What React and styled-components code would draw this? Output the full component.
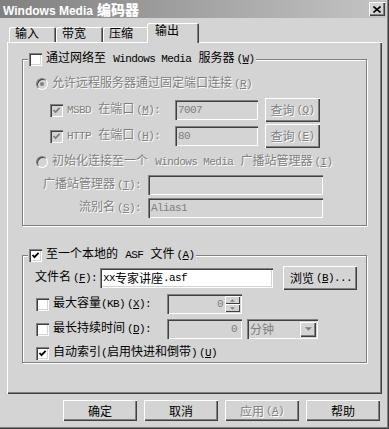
import React from "react";
import styled, { createGlobalStyle } from "styled-components";

const FACE = "#d4d4d4";
const SHADOW = "#808080";
const DARK = "#404040";

const GlobalStyle = createGlobalStyle`
  html, body {
    margin: 0;
    padding: 0;
    background: ${FACE};
  }
  body {
    font-family: "Liberation Mono", "Noto Sans CJK SC", monospace;
    font-size: 12px;
    color: #000;
  }
`;

const Window = styled.div`
  width: 389px;
  height: 429px;
  box-sizing: border-box;
  background: ${FACE};
  box-shadow: inset -1px -1px ${DARK}, inset -2px -2px ${SHADOW};
  display: flex;
  flex-direction: column;
`;

const TitleBar = styled.div`
  height: 18px;
  margin-right: 3px;
  display: flex;
  align-items: center;
  justify-content: space-between;
  background: linear-gradient(to right, #808080, #c4c4c4);
`;

const TitleText = styled.span`
  padding-left: 3px;
  color: #fff;
  font-family: "Liberation Sans", "Noto Sans CJK SC", sans-serif;
  font-weight: 700;
  font-size: 12px;
  white-space: nowrap;

  b {
    font-size: 14px;
    margin-left: 4px;
  }
`;

const CloseButton = styled.span`
  width: 16px;
  height: 14px;
  margin-right: 1px;
  box-sizing: border-box;
  display: flex;
  align-items: center;
  justify-content: center;
  background: ${FACE};
  box-shadow: inset 1px 1px #fff, inset -1px -1px ${DARK}, inset -2px -2px ${SHADOW};
`;

const Body = styled.div`
  padding-left: 7px;
  display: flex;
  flex-direction: column;
`;

const TabStrip = styled.div`
  height: 24px;
  padding-left: 2px;
  display: flex;
  align-items: flex-end;
`;

const Tab = styled.div`
  box-sizing: border-box;
  width: ${({ $active }) => ($active ? 52 : 47)}px;
  height: ${({ $active }) => ($active ? 20 : 15)}px;
  margin: ${({ $active }) => ($active ? "0 -2px -1px -3px" : "0")};
  padding-left: ${({ $active }) => ($active ? 8 : 6)}px;
  padding-top: ${({ $active }) => ($active ? 2 : 0)}px;
  display: flex;
  align-items: ${({ $active }) => ($active ? "flex-start" : "center")};
  line-height: 14px;
  background: ${FACE};
  border-radius: 2px 2px 0 0;
  box-shadow: inset 1px 1px #fff, inset -1px 0 ${DARK}, inset -2px 0 ${SHADOW};
  position: relative;
  z-index: ${({ $active }) => ($active ? 1 : 0)};
`;

const Panel = styled.div`
  width: 375px;
  height: 352px;
  box-sizing: border-box;
  padding: 10px 0 0 15px;
  box-shadow: inset 1px 1px #fff, inset -1px -1px ${DARK}, inset -2px -2px ${SHADOW};
  display: flex;
  flex-direction: column;
`;

const Group = styled.fieldset`
  width: 345px;
  box-sizing: border-box;
  margin: ${({ $top }) => $top || 0}px 0 0 0;
  padding: 0 0 ${({ $bottom }) => $bottom}px 0;
  border: 1px solid ${SHADOW};
  box-shadow: inset 1px 1px #fff, 1px 1px #fff;
  min-width: 0;
`;

const Legend = styled.legend`
  margin-left: 5px;
  padding: 0 2px 0 1px;
  height: 14px;
  background: ${FACE};
  white-space: nowrap;
`;

const Inline = styled.span`
  display: inline-flex;
  align-items: center;
  gap: 4px;
  height: 14px;
  line-height: 14px;
  white-space: nowrap;
`;

const Row = styled.div`
  display: flex;
  align-items: center;
  height: ${({ $h }) => $h}px;
  margin-top: ${({ $mt }) => $mt}px;
  padding-left: ${({ $pl }) => $pl || 0}px;
  white-space: nowrap;
`;

const Cell = styled.div`
  width: ${({ $w }) => $w}px;
  flex: none;
  display: flex;
  align-items: center;
  justify-content: ${({ $right }) => ($right ? "flex-end" : "flex-start")};
  padding-right: ${({ $right }) => ($right ? 7 : 0)}px;
  box-sizing: border-box;
  gap: 4px;
`;

const Label = styled.span`
  line-height: 14px;
  white-space: nowrap;
  color: ${({ $disabled }) => ($disabled ? SHADOW : "#000")};
  text-shadow: ${({ $disabled }) => ($disabled ? "1px 1px 0 #fff" : "none")};
`;

// Latin runs: narrow 6px cells like the dialog's bitmap font
const Lat = styled.span`
  font-family: "Liberation Mono", monospace;
  font-size: 11px;
  letter-spacing: -0.6px;
`;

const KeyHint = styled(Lat)`
  margin-left: 2px;

  u {
    text-underline-offset: 1px;
  }
`;

const Key = ({ k }) => (
  <KeyHint>
    (<u>{k}</u>)
  </KeyHint>
);

const Box = styled.span`
  width: 13px;
  height: 13px;
  flex: none;
  box-sizing: border-box;
  display: inline-flex;
  align-items: center;
  justify-content: center;
  background: ${({ $disabled }) => ($disabled ? FACE : "#fff")};
  box-shadow: inset 1px 1px ${SHADOW}, inset 2px 2px ${DARK}, inset -1px -1px #fff,
    inset -2px -2px ${FACE};
`;

const Check = ({ checked, disabled }) => (
  <Box $disabled={disabled}>
    {checked && (
      <svg width="9" height="9" viewBox="0 0 9 9">
        <path
          d="M1.5 4 L3.5 6.2 L7.6 1.8"
          fill="none"
          stroke={disabled ? SHADOW : "#000"}
          strokeWidth="1.8"
        />
      </svg>
    )}
  </Box>
);

const RadioRing = styled.span`
  width: 12px;
  height: 12px;
  flex: none;
  box-sizing: border-box;
  border-radius: 50%;
  display: inline-flex;
  align-items: center;
  justify-content: center;
  background: ${({ $disabled }) => ($disabled ? FACE : "#fff")};
  border: 1px solid;
  border-color: ${SHADOW} #fff #fff ${SHADOW};
  box-shadow: inset 1px 1px ${DARK};
`;

const Dot = styled.span`
  width: 4px;
  height: 4px;
  border-radius: 50%;
  background: ${({ $disabled }) => ($disabled ? SHADOW : "#000")};
`;

const Radio = ({ checked, disabled }) => (
  <RadioRing $disabled={disabled}>{checked && <Dot $disabled={disabled} />}</RadioRing>
);

const Field = styled.div`
  width: ${({ $w }) => $w}px;
  height: ${({ $h }) => $h || 20}px;
  flex: none;
  margin-left: ${({ $ml }) => $ml || 0}px;
  box-sizing: border-box;
  padding: 0 ${({ $pr }) => $pr || 3}px 0 3px;
  display: flex;
  align-items: center;
  justify-content: ${({ $right }) => ($right ? "flex-end" : "flex-start")};
  background: ${({ $disabled }) => ($disabled ? FACE : "#fff")};
  color: ${({ $disabled }) => ($disabled ? SHADOW : "#000")};
  box-shadow: inset 1px 1px ${SHADOW}, inset 2px 2px ${DARK}, inset -1px -1px #fff,
    inset -2px -2px ${FACE};
  white-space: nowrap;
`;

const Button = styled.div`
  width: ${({ $w }) => $w}px;
  height: ${({ $h }) => $h || 21}px;
  flex: none;
  margin-left: ${({ $ml }) => $ml || 0}px;
  box-sizing: border-box;
  display: flex;
  align-items: center;
  justify-content: ${({ $left }) => ($left ? "flex-start" : "center")};
  padding-left: ${({ $left }) => ($left ? 7 : 0)}px;
  background: ${FACE};
  color: ${({ $disabled }) => ($disabled ? SHADOW : "#000")};
  text-shadow: ${({ $disabled }) => ($disabled ? "1px 1px 0 #fff" : "none")};
  box-shadow: inset 1px 1px #fff, inset -1px -1px ${DARK}, inset -2px -2px ${SHADOW};
  white-space: nowrap;
`;

const SpinValue = styled(Lat)`
  margin-left: auto;
  margin-right: 2px;
`;

const SpinBox = styled.div`
  width: 15px;
  height: 16px;
  display: flex;
  flex-direction: column;
`;

const SpinHalf = styled.span`
  flex: 1;
  display: flex;
  align-items: center;
  justify-content: center;
  background: ${FACE};
  box-shadow: inset 1px 1px #fff, inset -1px -1px ${DARK};
`;

const Arrow = ({ up, size = 5 }) => (
  <svg width={size} height={Math.ceil(size / 2)} viewBox="0 0 6 3">
    <path d={up ? "M0 3 L3 0 L6 3 Z" : "M0 0 L6 0 L3 3 Z"} fill={SHADOW} />
  </svg>
);

const DropButton = styled.span`
  margin-left: auto;
  width: 16px;
  height: 15px;
  display: flex;
  align-items: center;
  justify-content: center;
  background: ${FACE};
  box-shadow: inset 1px 1px #fff, inset -1px -1px ${DARK}, inset -2px -2px ${SHADOW};
`;

const ButtonRow = styled.div`
  margin-top: 6px;
  padding-right: 9px;
  display: flex;
  justify-content: flex-end;
  gap: 7px;
`;

export default function App() {
  return (
    <>
      <GlobalStyle />
      <Window>
        <TitleBar>
          <TitleText>
            Windows Media<b>编码器</b>
          </TitleText>
          <CloseButton>
            <svg width="8" height="7" viewBox="0 0 8 7">
              <path d="M0.5 0.5 L7.5 6.5 M7.5 0.5 L0.5 6.5" stroke="#000" strokeWidth="1.6" />
            </svg>
          </CloseButton>
        </TitleBar>

        <Body>
          <TabStrip>
            <Tab>输入</Tab>
            <Tab>带宽</Tab>
            <Tab>压缩</Tab>
            <Tab $active>输出</Tab>
          </TabStrip>

          <Panel>
            <Group $bottom={7}>
              <Legend>
                <Inline>
                  <Check />
                  <Label>
                    通过网络至 <Lat>Windows Media</Lat> 服务器<Key k="W" />
                  </Label>
                </Inline>
              </Legend>

              <Row $h={14} $mt={11} $pl={13}>
                <Cell $w={240}>
                  <Radio checked disabled />
                  <Label $disabled>
                    允许远程服务器通过固定端口连接<Key k="R" />
                  </Label>
                </Cell>
              </Row>

              <Row $h={24} $mt={7} $pl={27}>
                <Cell $w={125}>
                  <Check checked disabled />
                  <Label $disabled>
                    <Lat>MSBD</Lat> 在端口<Key k="M" />
                    <Lat>:</Lat>
                  </Label>
                </Cell>
                <Field $w={83} $disabled>
                  <Lat>7007</Lat>
                </Field>
                <Button $w={55} $h={24} $ml={7} $disabled>
                  查询<Key k="Q" />
                </Button>
              </Row>

              <Row $h={24} $mt={2} $pl={27}>
                <Cell $w={125}>
                  <Check checked disabled />
                  <Label $disabled>
                    <Lat>HTTP</Lat> 在端口<Key k="H" />
                    <Lat>:</Lat>
                  </Label>
                </Cell>
                <Field $w={83} $disabled>
                  <Lat>80</Lat>
                </Field>
                <Button $w={55} $h={24} $ml={7} $disabled>
                  查询<Key k="E" />
                </Button>
              </Row>

              <Row $h={14} $mt={7} $pl={13}>
                <Cell $w={320}>
                  <Radio disabled />
                  <Label $disabled>
                    初始化连接至一个 <Lat>Windows Media</Lat> 广播站管理器<Key k="I" />
                  </Label>
                </Cell>
              </Row>

              <Row $h={20} $mt={6}>
                <Cell $w={125} $right>
                  <Label $disabled>
                    广播站管理器<Key k="T" />
                    <Lat>:</Lat>
                  </Label>
                </Cell>
                <Field $w={175} $disabled />
              </Row>

              <Row $h={20} $mt={3}>
                <Cell $w={125} $right>
                  <Label $disabled>
                    流别名<Key k="S" />
                    <Lat>:</Lat>
                  </Label>
                </Cell>
                <Field $w={175} $disabled>
                  <Lat>Alias1</Lat>
                </Field>
              </Row>
            </Group>

            <Group $top={22} $bottom={2}>
              <Legend>
                <Inline>
                  <Check checked />
                  <Label>
                    至一个本地的 <Lat>ASF</Lat> 文件<Key k="A" />
                  </Label>
                </Inline>
              </Legend>

              <Row $h={24} $mt={4} $pl={12}>
                <Cell $w={65}>
                  <Label>
                    文件名<Key k="F" />
                    <Lat>:</Lat>
                  </Label>
                </Cell>
                <Field $w={173}>
                  <Lat>xx</Lat>专家讲座<Lat>.asf</Lat>
                </Field>
                <Button $w={74} $h={24} $ml={10} $left>
                  浏览<Key k="B" />
                  <Lat>...</Lat>
                </Button>
              </Row>

              <Row $h={20} $mt={4} $pl={13}>
                <Cell $w={131}>
                  <Check />
                  <Label>
                    最大容量<Lat>(KB)</Lat>
                    <Key k="X" />
                    <Lat>:</Lat>
                  </Label>
                </Cell>
                <Field $w={75} $disabled $pr={2}>
                  <SpinValue>0</SpinValue>
                  <SpinBox>
                    <SpinHalf>
                      <Arrow up />
                    </SpinHalf>
                    <SpinHalf>
                      <Arrow />
                    </SpinHalf>
                  </SpinBox>
                </Field>
              </Row>

              <Row $h={20} $mt={5} $pl={13}>
                <Cell $w={131}>
                  <Check />
                  <Label>
                    最长持续时间<Key k="D" />
                    <Lat>:</Lat>
                  </Label>
                </Cell>
                <Field $w={75} $disabled $right $pr={5}>
                  <Lat>0</Lat>
                </Field>
                <Field $w={71} $ml={5} $disabled $pr={2}>
                  分钟
                  <DropButton>
                    <Arrow size={7} />
                  </DropButton>
                </Field>
              </Row>

              <Row $h={14} $mt={7} $pl={13}>
                <Cell $w={300}>
                  <Check checked />
                  <Label>
                    自动索引<Lat>(</Lat>启用快进和倒带<Lat>)</Lat>
                    <Key k="U" />
                  </Label>
                </Cell>
              </Row>
            </Group>
          </Panel>

          <ButtonRow>
            <Button $w={74}>确定</Button>
            <Button $w={74}>取消</Button>
            <Button $w={74} $disabled>
              应用<Key k="A" />
            </Button>
            <Button $w={74}>帮助</Button>
          </ButtonRow>
        </Body>
      </Window>
    </>
  );
}
